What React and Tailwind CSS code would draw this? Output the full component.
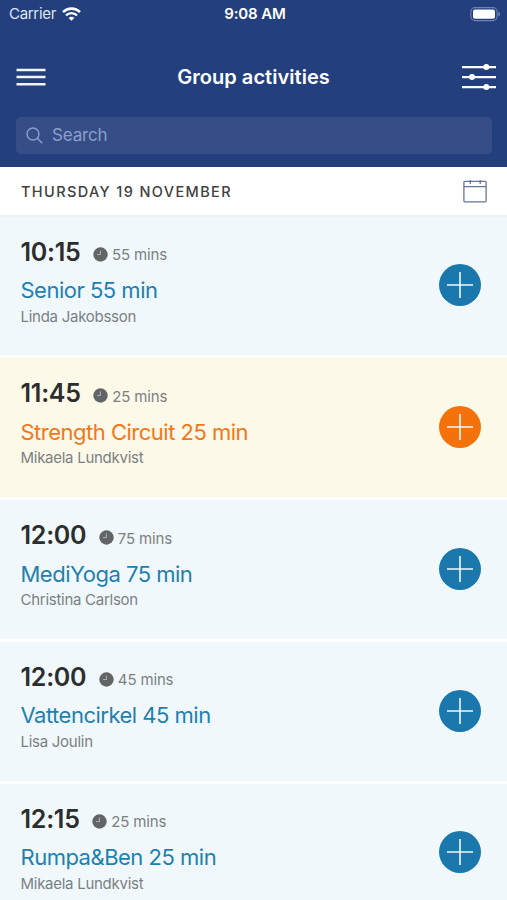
import clsx from 'clsx';

const ACTIVITIES = [
  { id: 1, time: '10:15', duration: '55 mins', name: 'Senior 55 min', trainer: 'Linda Jakobsson' },
  { id: 2, time: '11:45', duration: '25 mins', name: 'Strength Circuit 25 min', trainer: 'Mikaela Lundkvist', highlighted: true },
  { id: 3, time: '12:00', duration: '75 mins', name: 'MediYoga 75 min', trainer: 'Christina Carlson' },
  { id: 4, time: '12:00', duration: '45 mins', name: 'Vattencirkel 45 min', trainer: 'Lisa Joulin' },
  { id: 5, time: '12:15', duration: '25 mins', name: 'Rumpa&Ben 25 min', trainer: 'Mikaela Lundkvist' },
];

function WifiIcon() {
  return (
    <svg className="w-[19px] h-[14px]" viewBox="0 0 19 14" fill="none" stroke="white">
      <path d="M1 5.2C5.8 .4 13.2 .4 18 5.2" strokeWidth="2.6" />
      <path d="M4 8.4C7.1 5.4 11.9 5.4 15 8.4" strokeWidth="2.4" />
      <path d="M9.5 13.8L6.6 10.9C8.2 9.4 10.8 9.4 12.4 10.9Z" fill="white" stroke="none" />
    </svg>
  );
}

function BatteryIcon() {
  return (
    <svg className="w-[31px] h-[15px]" viewBox="0 0 31 15" fill="none">
      <rect x=".9" y=".6" width="26.2" height="13" rx="4" stroke="#7183b0" strokeWidth="1.1" />
      <rect x="3" y="2.6" width="22" height="9.2" rx="2" fill="white" />
      <path d="M28.3 4.8V9.4C30.8 8.6 30.8 5.6 28.3 4.8Z" fill="#7183b0" />
    </svg>
  );
}

function MenuIcon() {
  return (
    <svg className="w-[30px] h-[20px]" viewBox="0 0 30 20" fill="none" stroke="#f0f4fb" strokeWidth="2.4">
      <path d="M.5 3H29.5M.5 10H29.5M.5 17.3H29.5" />
    </svg>
  );
}

function FilterIcon() {
  return (
    <svg className="w-[34px] h-[28px]" viewBox="0 0 34 28" fill="white">
      <path d="M0 3H34V5.2H0ZM0 13H34V15.2H0ZM0 23H34V25.2H0Z" />
      <circle cx="24.3" cy="4.1" r="3" />
      <circle cx="10" cy="14.1" r="3" />
      <circle cx="24.3" cy="24.1" r="3" />
    </svg>
  );
}

function CalendarIcon() {
  return (
    <svg className="w-[24px] h-[24px]" viewBox="0 0 24 24" fill="none" stroke="#65759f" strokeWidth="1.3">
      <rect x=".9" y="2.4" width="22.2" height="20.4" rx="1" />
      <path d="M1 7.6H23M7.3 .9V4.9M17.2 .9V4.9" />
    </svg>
  );
}

function ClockIcon() {
  return (
    <svg className="relative -top-px w-[15px] h-[15px]" viewBox="0 0 15 15">
      <circle cx="7.5" cy="7.5" r="7.2" fill="#626566" />
      <path d="M7.4 3.5V7.5H4" fill="none" stroke="#a9adae" strokeWidth="1.1" />
    </svg>
  );
}

function ActivityRow({ activity }) {
  const { time, duration, name, trainer, highlighted } = activity;

  return (
    <li className={clsx('flex h-[141.75px] shrink-0 justify-between border-b-3 border-white pl-[20.5px] pr-[26px]', highlighted ? 'bg-[#fdf9e9]' : 'bg-[#f0f8fb]')}>
      <div className="pt-[19px] whitespace-nowrap">
        <div className="flex h-8 items-start">
          <span className="text-[25px] leading-8 font-semibold tracking-[-0.25px] text-[#2b2d2e]">{time}</span>
          <span className="ml-[12.5px] mt-[9.5px] flex items-center gap-1 text-[15px] leading-5 tracking-[-0.15px] text-[#7c8082]">
            <ClockIcon />
            {duration}
          </span>
        </div>
        <h2 className={clsx('mt-[6.5px] text-[22px] leading-8 tracking-[-0.5px]', highlighted ? 'text-[#f07818]' : 'text-[#1f80b0]')}>{name}</h2>
        <p className="mt-[0.7px] text-[15px] leading-5 tracking-[-0.27px] text-[#7c8082]">{trainer}</p>
      </div>
      <button aria-label="Book" className={clsx('mt-[47.9px] size-[42px] rounded-full', highlighted ? 'bg-[#f47209]' : 'bg-[#1b78ad]')}>
        <svg className="size-[42px]" viewBox="0 0 42 42" stroke="#eef8fc" strokeWidth="1.6">
          <path d="M8 21H34M21 8V34" />
        </svg>
      </button>
    </li>
  );
}

export default function App() {
  return (
    <div className="flex h-[900px] w-[507px] flex-col overflow-hidden bg-white font-['Inter',sans-serif]">
      {/* Header */}
      <header className="h-[167px] shrink-0 bg-[#233f7d] text-white">
        <div className="grid h-7 grid-cols-3 items-center pl-[9px] pr-[6px] text-[15px]">
          <div className="flex items-center gap-1.5 text-[#dfe5f2]">
            <span className="tracking-[-0.3px]">Carrier</span>
            <WifiIcon />
          </div>
          <span className="text-center font-semibold tracking-[-0.1px]">9:08 AM</span>
          <div className="flex justify-end"><BatteryIcon /></div>
        </div>

        <div className="grid h-[89px] grid-cols-[1fr_auto_1fr] items-center pl-4 pr-[11px] pt-[9px]">
          <button aria-label="Menu" className="w-[30px]"><MenuIcon /></button>
          <h1 className="-ml-[5px] text-[20px] font-semibold tracking-[0.05px]">Group activities</h1>
          <button aria-label="Filter" className="justify-self-end"><FilterIcon /></button>
        </div>

        <label className="mx-[15.5px] flex h-[37px] items-center gap-[9px] rounded-[5px] bg-[#354e88] pl-[10.5px]">
          <svg className="size-[17px]" viewBox="0 0 17 17" fill="none" stroke="#8b9fc8" strokeWidth="1.4">
            <circle cx="7" cy="7" r="6" />
            <path d="M11.3 11.3L16.3 16.3" />
          </svg>
          <input type="text" placeholder="Search" className="w-80 bg-transparent pt-px text-[17px] tracking-[-0.15px] outline-none placeholder:text-[#8b9fc8]" />
        </label>
      </header>

      {/* Selected day */}
      <div className="flex h-[49.5px] shrink-0 items-center justify-between border-b-2 border-[#eef1f2] pl-[21px] pr-5">
        <span className="pt-[2px] text-[14.5px] font-medium tracking-[1.38px] text-[#3f4142]">THURSDAY 19 NOVEMBER</span>
        <CalendarIcon />
      </div>

      <ul className="flex flex-col">
        {ACTIVITIES.map(a => <ActivityRow key={a.id} activity={a} />)}
      </ul>
    </div>
  );
}
